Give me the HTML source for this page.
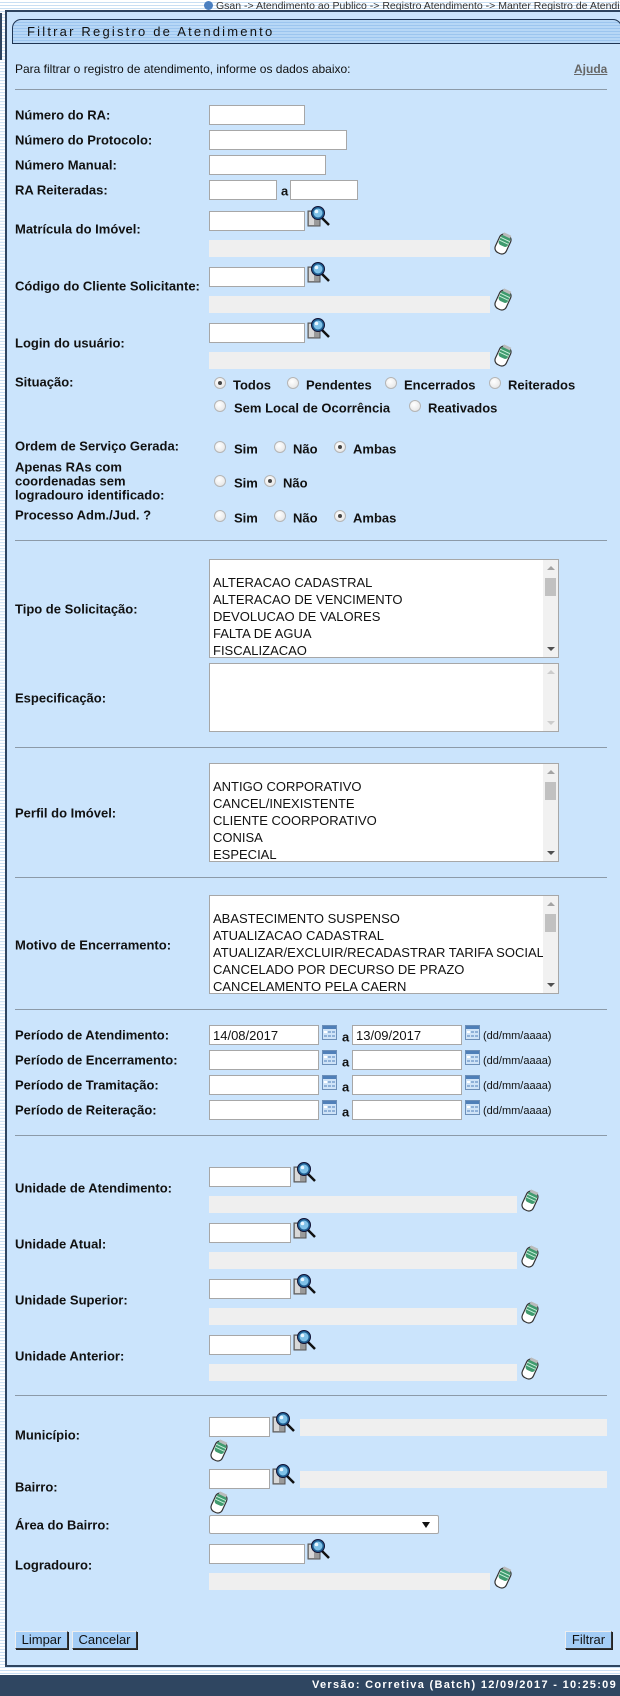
<!DOCTYPE html>
<html><head><meta charset="utf-8">
<style>
*{margin:0;padding:0;box-sizing:border-box}
body{width:620px;height:1696px;position:relative;overflow:hidden;font-family:"Liberation Sans",Arial,sans-serif;background:repeating-linear-gradient(#fff 0 2px,#c9dff3 2px 3px);}
.a{position:absolute}
#panel{left:5px;top:10px;width:617px;height:1657px;background:#cbe4fc;border:2px solid #2e445f;border-right:none}
.lbl{position:absolute;left:15px;font-size:13px;font-weight:bold;color:#111;transform:translateY(-50%);white-space:nowrap}
.in{position:absolute;background:#fff;border:1px solid #a7a7a7;height:20px;font-size:13px;padding:2px 3px;color:#111}
.gr{position:absolute;background:#efefef;height:17px}
.hr{position:absolute;left:15px;width:592px;height:1px;background:#8c9aa8}
.rd{position:absolute;width:12px;height:12px;border-radius:50%;border:1px solid #b5b5b5;background:radial-gradient(circle at 40% 35%,#fff,#e0e0e0);transform:translateY(-50%)}
.rd.c::after{content:"";position:absolute;left:3px;top:3px;width:4px;height:4px;border-radius:50%;background:#444}
.rt{position:absolute;font-size:13px;font-weight:bold;color:#111;transform:translateY(-50%);white-space:nowrap}
.sel{position:absolute;left:209px;width:350px;background:#fff;border:1px solid #a7a7a7;overflow:hidden}
.sel .o{font-size:13px;line-height:17px;padding-left:3px;color:#111;white-space:nowrap;width:333px;overflow:hidden}
.sb{position:absolute;right:0;top:0;bottom:0;width:15px;background:#f1f1f1}
.sb .t{position:absolute;left:2px;top:18px;width:11px;height:18px;background:#c1c1c1}
.sb .u,.sb .d{position:absolute;left:4px;width:0;height:0;border-left:4px solid transparent;border-right:4px solid transparent}
.sb .u{top:6px;border-bottom:4px solid #a3a3a3}
.sb .d{bottom:6px;border-top:4px solid #505050}
.btn{position:absolute;top:1631px;height:18px;background:#a4cdf6;border:1px solid #333;border-top-color:#eee;border-left-color:#eee;font-size:13px;line-height:16px;text-align:center;color:#111;box-shadow:1px 1px 0 #222}
.cal{position:absolute;width:15px;height:15px}
</style></head><body>
<div class="a" style="left:0;top:13px;width:2px;height:47px;background:#2e445f"></div>
<div class="a" style="left:204px;top:0;font-size:10.5px;color:#333;white-space:nowrap"><span style="display:inline-block;width:9px;height:9px;border-radius:50%;background:#4a7fc0;vertical-align:-1px;margin-right:3px"></span>Gsan -&gt; Atendimento ao Publico -&gt; Registro Atendimento -&gt; Manter Registro de Atendimento</div>
<div id="panel" class="a"></div>
<div class="a" style="left:12px;top:19px;width:610px;height:25px;border:1px solid #1f3553;border-radius:9px 9px 0 0;background:repeating-linear-gradient(#b7d7f6 0 2px,#9cc5ef 2px 3px)"></div>
<div class="a" style="left:27px;top:24px;font-size:13px;letter-spacing:2.2px;color:#111">Filtrar Registro de Atendimento</div>
<div class="a" style="left:15px;top:62px;font-size:12px;color:#111">Para filtrar o registro de atendimento, informe os dados abaixo:</div>
<div class="a" style="left:574px;top:62px;font-size:12px;font-weight:bold;color:#666;text-decoration:underline">Ajuda</div>
<div class="hr" style="top:89px"></div>

<svg width="0" height="0" style="position:absolute"><defs>
<symbol id="mg" viewBox="0 0 25 25"><rect x="1" y="7" width="12" height="15" fill="#9a9a9a" stroke="#555" stroke-width="1"/><rect x="2" y="8" width="5" height="13" fill="#d8d8d8"/><line x1="14" y1="13" x2="22" y2="21" stroke="#111" stroke-width="2.5"/><circle cx="11" cy="9" r="6.5" fill="#1f5f92" stroke="#113" stroke-width="1"/><circle cx="11" cy="9" r="4.5" fill="#7fc1e8"/><circle cx="9.5" cy="7.5" r="1.8" fill="#e8f6ff"/></symbol>
<symbol id="er" viewBox="0 0 20 25"><g transform="rotate(25 10 12)"><rect x="4" y="2" width="12" height="20" rx="5" fill="#fff" stroke="#333" stroke-width="1.2"/><rect x="5" y="3" width="10" height="11" rx="3" fill="#3f9a6e"/><line x1="5" y1="7" x2="15" y2="7" stroke="#c9f0da" stroke-width="1"/><line x1="5" y1="10" x2="15" y2="10" stroke="#c9f0da" stroke-width="1"/><rect x="6" y="1" width="8" height="3" fill="#bbb"/></g></symbol>
<symbol id="cl" viewBox="0 0 15 15"><rect x="0.5" y="0.5" width="14" height="14" fill="#cfe3f7" stroke="#6c8fb8"/><rect x="1" y="1" width="13" height="3" fill="#4f7fb8"/><g fill="#8fb1d8"><rect x="2" y="6" width="3" height="2"/><rect x="6" y="6" width="3" height="2"/><rect x="10" y="6" width="3" height="2"/><rect x="2" y="10" width="3" height="2"/><rect x="6" y="10" width="3" height="2"/><rect x="10" y="10" width="3" height="2"/></g><rect x="2" y="6" width="3" height="2" fill="#fff"/></symbol>
</defs></svg>

<div class="lbl" style="top:115px">Número do RA:</div><div class="in" style="left:209px;top:105px;width:96px"></div>
<div class="lbl" style="top:140px">Número do Protocolo:</div><div class="in" style="left:209px;top:130px;width:138px"></div>
<div class="lbl" style="top:165px">Número Manual:</div><div class="in" style="left:209px;top:155px;width:117px"></div>
<div class="lbl" style="top:190px">RA Reiteradas:</div><div class="in" style="left:209px;top:180px;width:68px"></div><div class="rt" style="left:281px;top:191px">a</div><div class="in" style="left:290px;top:180px;width:68px"></div>

<div class="lbl" style="top:229px">Matrícula do Imóvel:</div><div class="in" style="left:209px;top:211px;width:96px"></div>
<svg class="a" style="left:307px;top:204px" width="25" height="25"><use href="#mg"/></svg>
<div class="gr" style="left:209px;top:240px;width:281px"></div><svg class="a" style="left:493px;top:232px" width="20" height="25"><use href="#er"/></svg>

<div class="lbl" style="top:286px">Código do Cliente Solicitante:</div><div class="in" style="left:209px;top:267px;width:96px"></div>
<svg class="a" style="left:307px;top:260px" width="25" height="25"><use href="#mg"/></svg>
<div class="gr" style="left:209px;top:296px;width:281px"></div><svg class="a" style="left:493px;top:288px" width="20" height="25"><use href="#er"/></svg>

<div class="lbl" style="top:343px">Login do usuário:</div><div class="in" style="left:209px;top:323px;width:96px"></div>
<svg class="a" style="left:307px;top:316px" width="25" height="25"><use href="#mg"/></svg>
<div class="gr" style="left:209px;top:352px;width:281px"></div><svg class="a" style="left:493px;top:344px" width="20" height="25"><use href="#er"/></svg>

<div class="lbl" style="top:382px">Situação:</div>
<div class="rd c" style="left:214px;top:383px"></div><div class="rt" style="left:233px;top:385px">Todos</div>
<div class="rd" style="left:287px;top:383px"></div><div class="rt" style="left:306px;top:385px">Pendentes</div>
<div class="rd" style="left:385px;top:383px"></div><div class="rt" style="left:404px;top:385px">Encerrados</div>
<div class="rd" style="left:489px;top:383px"></div><div class="rt" style="left:508px;top:385px">Reiterados</div>
<div class="rd" style="left:214px;top:406px"></div><div class="rt" style="left:234px;top:408px">Sem Local de Ocorrência</div>
<div class="rd" style="left:409px;top:406px"></div><div class="rt" style="left:428px;top:408px">Reativados</div>

<div class="lbl" style="top:446px">Ordem de Serviço Gerada:</div>
<div class="rd" style="left:214px;top:447px"></div><div class="rt" style="left:234px;top:449px">Sim</div>
<div class="rd" style="left:274px;top:447px"></div><div class="rt" style="left:293px;top:449px">Não</div>
<div class="rd c" style="left:334px;top:447px"></div><div class="rt" style="left:353px;top:449px">Ambas</div>

<div class="lbl" style="top:467px">Apenas RAs com</div><div class="lbl" style="top:481px">coordenadas sem</div><div class="lbl" style="top:495px">logradouro identificado:</div>
<div class="rd" style="left:214px;top:481px"></div><div class="rt" style="left:234px;top:483px">Sim</div>
<div class="rd c" style="left:264px;top:481px"></div><div class="rt" style="left:283px;top:483px">Não</div>

<div class="lbl" style="top:515px">Processo Adm./Jud. ?</div>
<div class="rd" style="left:214px;top:516px"></div><div class="rt" style="left:234px;top:518px">Sim</div>
<div class="rd" style="left:274px;top:516px"></div><div class="rt" style="left:293px;top:518px">Não</div>
<div class="rd c" style="left:334px;top:516px"></div><div class="rt" style="left:353px;top:518px">Ambas</div>
<div class="hr" style="top:540px"></div>

<div class="lbl" style="top:609px">Tipo de Solicitação:</div>
<div class="sel" style="top:559px;height:99px"><div style="height:14px"></div><div class="o">ALTERACAO CADASTRAL</div><div class="o">ALTERACAO DE VENCIMENTO</div><div class="o">DEVOLUCAO DE VALORES</div><div class="o">FALTA DE AGUA</div><div class="o">FISCALIZACAO</div><div class="sb"><div class="u"></div><div class="t"></div><div class="d"></div></div></div>

<div class="lbl" style="top:698px">Especificação:</div>
<div class="sel" style="top:663px;height:69px"><div class="sb"><div class="u" style="border-bottom-color:#ccc"></div><div class="d" style="border-top-color:#ccc"></div></div></div>
<div class="hr" style="top:747px"></div>

<div class="lbl" style="top:813px">Perfil do Imóvel:</div>
<div class="sel" style="top:763px;height:99px"><div style="height:14px"></div><div class="o">ANTIGO CORPORATIVO</div><div class="o">CANCEL/INEXISTENTE</div><div class="o">CLIENTE COORPORATIVO</div><div class="o">CONISA</div><div class="o">ESPECIAL</div><div class="sb"><div class="u"></div><div class="t"></div><div class="d"></div></div></div>
<div class="hr" style="top:877px"></div>

<div class="lbl" style="top:945px">Motivo de Encerramento:</div>
<div class="sel" style="top:895px;height:99px"><div style="height:14px"></div><div class="o">ABASTECIMENTO SUSPENSO</div><div class="o">ATUALIZACAO CADASTRAL</div><div class="o">ATUALIZAR/EXCLUIR/RECADASTRAR TARIFA SOCIAL</div><div class="o">CANCELADO POR DECURSO DE PRAZO</div><div class="o">CANCELAMENTO PELA CAERN</div><div class="sb"><div class="u"></div><div class="t"></div><div class="d"></div></div></div>
<div class="hr" style="top:1009px"></div>

<div class="lbl" style="top:1035px">Período de Atendimento:</div>
<div class="in" style="left:209px;top:1025px;width:110px">14/08/2017</div><svg class="cal" style="left:322px;top:1025px"><use href="#cl"/></svg><div class="rt" style="left:342px;top:1037px">a</div>
<div class="in" style="left:352px;top:1025px;width:110px">13/09/2017</div><svg class="cal" style="left:465px;top:1025px"><use href="#cl"/></svg><div class="a" style="left:483px;top:1030px;font-size:11px;color:#111">(dd/mm/aaaa)</div>

<div class="lbl" style="top:1060px">Período de Encerramento:</div>
<div class="in" style="left:209px;top:1050px;width:110px"></div><svg class="cal" style="left:322px;top:1050px"><use href="#cl"/></svg><div class="rt" style="left:342px;top:1062px">a</div>
<div class="in" style="left:352px;top:1050px;width:110px"></div><svg class="cal" style="left:465px;top:1050px"><use href="#cl"/></svg><div class="a" style="left:483px;top:1055px;font-size:11px;color:#111">(dd/mm/aaaa)</div>

<div class="lbl" style="top:1085px">Período de Tramitação:</div>
<div class="in" style="left:209px;top:1075px;width:110px"></div><svg class="cal" style="left:322px;top:1075px"><use href="#cl"/></svg><div class="rt" style="left:342px;top:1087px">a</div>
<div class="in" style="left:352px;top:1075px;width:110px"></div><svg class="cal" style="left:465px;top:1075px"><use href="#cl"/></svg><div class="a" style="left:483px;top:1080px;font-size:11px;color:#111">(dd/mm/aaaa)</div>

<div class="lbl" style="top:1110px">Período de Reiteração:</div>
<div class="in" style="left:209px;top:1100px;width:110px"></div><svg class="cal" style="left:322px;top:1100px"><use href="#cl"/></svg><div class="rt" style="left:342px;top:1112px">a</div>
<div class="in" style="left:352px;top:1100px;width:110px"></div><svg class="cal" style="left:465px;top:1100px"><use href="#cl"/></svg><div class="a" style="left:483px;top:1105px;font-size:11px;color:#111">(dd/mm/aaaa)</div>
<div class="hr" style="top:1135px"></div>

<div class="lbl" style="top:1188px">Unidade de Atendimento:</div><div class="in" style="left:209px;top:1167px;width:82px"></div>
<svg class="a" style="left:293px;top:1160px" width="25" height="25"><use href="#mg"/></svg>
<div class="gr" style="left:209px;top:1196px;width:308px"></div><svg class="a" style="left:520px;top:1189px" width="20" height="25"><use href="#er"/></svg>

<div class="lbl" style="top:1244px">Unidade Atual:</div><div class="in" style="left:209px;top:1223px;width:82px"></div>
<svg class="a" style="left:293px;top:1216px" width="25" height="25"><use href="#mg"/></svg>
<div class="gr" style="left:209px;top:1252px;width:308px"></div><svg class="a" style="left:520px;top:1245px" width="20" height="25"><use href="#er"/></svg>

<div class="lbl" style="top:1300px">Unidade Superior:</div><div class="in" style="left:209px;top:1279px;width:82px"></div>
<svg class="a" style="left:293px;top:1272px" width="25" height="25"><use href="#mg"/></svg>
<div class="gr" style="left:209px;top:1308px;width:308px"></div><svg class="a" style="left:520px;top:1301px" width="20" height="25"><use href="#er"/></svg>

<div class="lbl" style="top:1356px">Unidade Anterior:</div><div class="in" style="left:209px;top:1335px;width:82px"></div>
<svg class="a" style="left:293px;top:1328px" width="25" height="25"><use href="#mg"/></svg>
<div class="gr" style="left:209px;top:1364px;width:308px"></div><svg class="a" style="left:520px;top:1357px" width="20" height="25"><use href="#er"/></svg>
<div class="hr" style="top:1395px"></div>

<div class="lbl" style="top:1435px">Município:</div><div class="in" style="left:209px;top:1417px;width:61px"></div>
<svg class="a" style="left:272px;top:1410px" width="25" height="25"><use href="#mg"/></svg>
<div class="gr" style="left:300px;top:1419px;width:307px"></div><svg class="a" style="left:209px;top:1439px" width="20" height="25"><use href="#er"/></svg>

<div class="lbl" style="top:1487px">Bairro:</div><div class="in" style="left:209px;top:1469px;width:61px"></div>
<svg class="a" style="left:272px;top:1462px" width="25" height="25"><use href="#mg"/></svg>
<div class="gr" style="left:300px;top:1471px;width:307px"></div><svg class="a" style="left:209px;top:1491px" width="20" height="25"><use href="#er"/></svg>

<div class="lbl" style="top:1525px">Área do Bairro:</div>
<div class="a" style="left:209px;top:1515px;width:230px;height:19px;background:#fff;border:1px solid #a7a7a7;border-radius:2px"><div class="a" style="right:8px;top:6px;border-left:4px solid transparent;border-right:4px solid transparent;border-top:6px solid #111"></div></div>

<div class="lbl" style="top:1565px">Logradouro:</div><div class="in" style="left:209px;top:1544px;width:96px"></div>
<svg class="a" style="left:307px;top:1537px" width="25" height="25"><use href="#mg"/></svg>
<div class="gr" style="left:209px;top:1573px;width:281px"></div><svg class="a" style="left:493px;top:1566px" width="20" height="25"><use href="#er"/></svg>

<div class="btn" style="left:15px;width:53px">Limpar</div>
<div class="btn" style="left:72px;width:65px">Cancelar</div>
<div class="btn" style="left:565px;width:47px">Filtrar</div>

<div class="a" style="left:0;top:1675px;width:620px;height:21px;background:#2f4661"></div>
<div class="a" style="right:3px;top:1679px;font-size:11px;font-weight:bold;letter-spacing:1.3px;color:#fff;white-space:nowrap">Versão: Corretiva (Batch) 12/09/2017 - 10:25:09</div>
</body></html>
